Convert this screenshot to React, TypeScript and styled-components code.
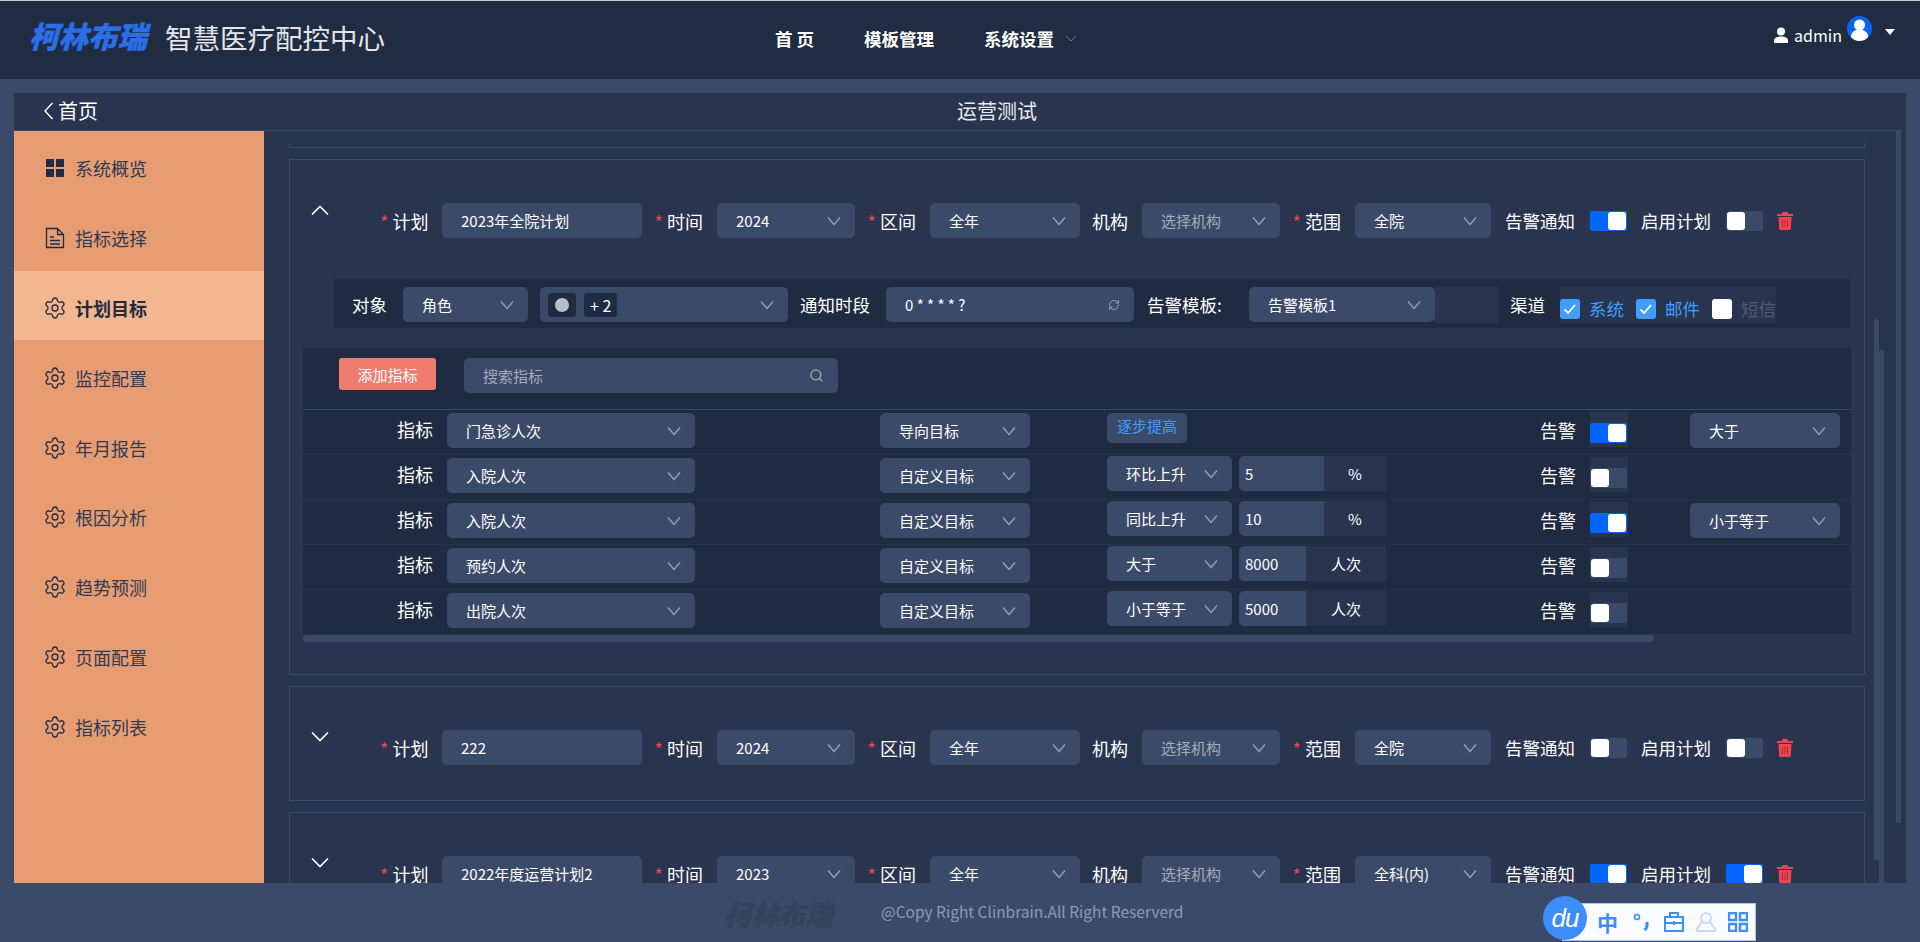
import * as React from 'react';
import styled, { createGlobalStyle } from 'styled-components';
import { RefreshCw, Search, Settings } from 'lucide-react';

const C = {
	header: '#1f2c42',
	page: '#3b4a68',
	panel: '#29344f',
	dark: '#1e2b40',
	field: '#3c4a6a',
	line: '#3a4a6a',
	rowLine: '#27334b',
	sidebar: '#e89c72',
	active: '#f3b68e',
	blue: '#409eff',
	on: '#0066ff',
	red: '#f04450',
	muted: '#a4acbc',
	arrow: '#9aa3b6',
};

const GlobalStyle = createGlobalStyle`
	html, body {
		margin: 0;
		padding: 0;
		background: ${C.page};
	}
	* {
		box-sizing: border-box;
	}
	body {
		font-family: "Noto Sans CJK SC", "Liberation Sans", sans-serif;
		color: #fff;
	}
`;

const Page = styled.div`
	position: relative;
	display: flex;
	flex-direction: column;
	width: 1920px;
	height: 942px;
	overflow: hidden;
	background: ${C.page};
`;

const Header = styled.header`
	display: flex;
	align-items: center;
	flex: none;
	height: 79px;
	padding: 0 25px 3px 32px;
	border-top: 1px solid #c9ccd2;
	background: ${C.header};
`;

const Logo = styled.div<{ $muted?: boolean }>`
	flex: none;
	width: ${p => (p.$muted ? 111 : 117)}px;
	margin: ${p => (p.$muted ? '6px 0 0' : '0 0 5px')};
	font-size: ${p => (p.$muted ? 27 : 29.5)}px;
	line-height: 1;
	font-weight: 900;
	white-space: nowrap;
	color: ${p => (p.$muted ? '#34425c' : '#2a6fe6')};
	-webkit-text-stroke: 0.4px currentColor;
	transform: skewX(-14deg);
`;

const Brand = styled.div`
	flex: none;
	width: 610px;
	margin: 0 0 4px 16px;
	font-size: 27.5px;
	color: #e2e5ea;
	white-space: nowrap;
`;

const Nav = styled.nav`
	display: flex;
	align-items: center;
	gap: 50px;
`;

const NavItem = styled.a`
	display: flex;
	align-items: center;
	gap: 11px;
	font-size: 17.5px;
	font-weight: 700;
	color: #fff;
	white-space: nowrap;
`;

const UserBox = styled.div`
	display: flex;
	align-self: flex-start;
	align-items: flex-start;
	margin: 15px 0 0 auto;
`;

const UserName = styled.span`
	margin: 8px 5px 0 5px;
	font-size: 16px;
	line-height: 22px;
`;

const TopIcon = styled.svg<{ $top: number; $left?: number }>`
	flex: none;
	display: block;
	margin-top: ${p => p.$top}px;
	margin-left: ${p => p.$left ?? 0}px;
`;

const Panel = styled.main`
	display: flex;
	flex-direction: column;
	flex: none;
	width: 1892px;
	height: 790px;
	margin: 14px 0 0 14px;
	background: ${C.panel};
`;

const TitleBar = styled.div`
	display: flex;
	align-items: center;
	flex: none;
	height: 38px;
	margin-right: 5px;
	padding: 0 0 2px 29px;
	border-bottom: 1px solid ${C.line};
`;

const Back = styled.div`
	display: flex;
	align-items: center;
	gap: 4px;
	width: 914px;
	font-size: 20px;
`;

const PageTitle = styled.div`
	font-size: 20px;
	color: #e8ebf0;
`;

const Body = styled.div`
	position: relative;
	display: flex;
	flex: 1;
	min-height: 0;
`;

const Sidebar = styled.aside`
	flex: none;
	width: 250px;
	background: ${C.sidebar};
`;

const MenuItem = styled.div<{ $active?: boolean }>`
	display: flex;
	align-items: center;
	gap: 8px;
	height: 69.8px;
	padding: 5px 0 0 29px;
	font-size: 18px;
	font-weight: ${p => (p.$active ? 700 : 400)};
	color: ${p => (p.$active ? C.dark : '#2f3b52')};
	background: ${p => (p.$active ? C.active : 'transparent')};
`;

const Content = styled.div`
	flex: 1;
	min-width: 0;
	padding: 12px 0 0 25px;
	overflow: hidden;
`;

const CardStub = styled.div`
	width: 1576px;
	height: 5px;
	border: 1px solid ${C.line};
	border-top: 0;
`;

const Card = styled.section<{ $h: number }>`
	width: 1576px;
	height: ${p => p.$h}px;
	margin-top: 11px;
	padding-top: 43px;
	border: 1px solid ${C.line};
`;

const PlanRow = styled.div`
	display: flex;
	align-items: center;
	height: 35px;
`;

const Toggle = styled.div`
	flex: none;
	align-self: flex-start;
	width: 90px;
	padding: 1px 0 0 20px;
`;

const FieldLabel = styled.label<{ $w: number }>`
	flex: none;
	width: ${p => p.$w}px;
	margin-right: 14px;
	font-size: 18px;
	line-height: 32px;
	text-align: right;
	white-space: nowrap;
`;

const Star = styled.span`
	margin-right: 4px;
	color: ${C.red};
	font-size: 18px;
	line-height: 1;
`;

const Field = styled.div<{ $w: number; $muted?: boolean }>`
	display: flex;
	align-items: center;
	justify-content: space-between;
	flex: none;
	width: ${p => p.$w}px;
	height: 35px;
	padding: 0 14px 0 19px;
	border-radius: 5px;
	background: ${C.field};
	font-size: 15px;
	white-space: nowrap;
	color: ${p => (p.$muted ? C.muted : '#fff')};
`;

const SwitchTrack = styled.div<{ $on?: boolean }>`
	display: flex;
	justify-content: ${p => (p.$on ? 'flex-end' : 'flex-start')};
	flex: none;
	width: 37px;
	height: 20px;
	padding: 1px;
	border-radius: 2px;
	background: ${p => (p.$on ? C.on : C.field)};
`;

const Knob = styled.span`
	display: block;
	width: 18px;
	height: 18px;
	border-radius: 3px;
	background: #fff;
`;

const PlainLabel = styled.span`
	flex: none;
	width: 71px;
	margin: 0 14px;
	font-size: 17.5px;
	white-space: nowrap;
`;

const TrashWrap = styled.span`
	display: block;
	flex: none;
	margin-left: 14px;
	line-height: 0;
`;

const NotifyRow = styled.div`
	display: flex;
	align-items: center;
	width: 1516px;
	height: 49px;
	margin: 41px 0 0 44px;
	padding: 2px 0 0 18px;
	background: ${C.dark};
`;

const RowText = styled.span<{ $ml?: number; $w?: number }>`
	flex: none;
	width: ${p => (p.$w ? `${p.$w}px` : 'auto')};
	margin-left: ${p => p.$ml ?? 0}px;
	font-size: 17.5px;
	white-space: nowrap;
`;

const Spaced = styled.div<{ $ml: number }>`
	flex: none;
	margin-left: ${p => p.$ml}px;
`;

const Tags = styled.span`
	display: flex;
	align-items: center;
	gap: 8px;
	margin-left: -11px;
`;

const MiniTag = styled.span`
	display: flex;
	align-items: center;
	justify-content: center;
	min-width: 28px;
	height: 24px;
	padding: 0 6px;
	border-radius: 3px;
	background: ${C.dark};
	font-size: 16px;
`;

const CloseDot = styled.span`
	display: block;
	width: 14px;
	height: 14px;
	border-radius: 50%;
	background: #b9bdc6;
`;

const Filler = styled.div`
	flex: none;
	width: 63px;
	height: 37px;
	background: ${C.panel};
`;

const Channels = styled.div`
	display: flex;
	align-items: center;
	flex: none;
	width: 216px;
	height: 37px;
	margin-left: 15px;
	padding-top: 8px;
	background: ${C.panel};
`;

const Check = styled.span<{ $on?: boolean }>`
	display: flex;
	align-items: center;
	justify-content: center;
	flex: none;
	width: 20px;
	height: 20px;
	margin-right: 9px;
	border-radius: 3px;
	background: ${p => (p.$on ? C.blue : '#fff')};
`;

const CheckText = styled.span<{ $on?: boolean }>`
	flex: none;
	width: 47px;
	font-size: 17.5px;
	white-space: nowrap;
	color: ${p => (p.$on ? C.blue : '#525c6e')};
`;

const TableBlock = styled.div`
	width: 1548px;
	height: 286px;
	margin: 20px 0 0 13px;
	background: ${C.dark};
`;

const Toolbar = styled.div`
	display: flex;
	align-items: flex-start;
	height: 62px;
	padding: 10px 0 0 36px;
	border-bottom: 1px solid ${C.line};
`;

const AddButton = styled.button`
	flex: none;
	width: 97px;
	height: 32px;
	margin-right: 28px;
	padding: 0;
	border: 0;
	border-radius: 3px;
	background: #f07c70;
	color: #fff;
	font-family: inherit;
	font-size: 15px;
`;

const TableRow = styled.div`
	display: flex;
	align-items: flex-start;
	height: 45px;
	border-bottom: 1px solid ${C.rowLine};

	&:last-child {
		border-bottom: 0;
	}
`;

const RowLabel = styled.span`
	flex: none;
	width: 130px;
	margin-right: 14px;
	font-size: 18px;
	line-height: 38px;
	text-align: right;
`;

const RowSelect = styled(Field)<{ $ml?: number }>`
	margin-top: 3px;
	margin-left: ${p => p.$ml ?? 0}px;
`;

const TypeCell = styled.div`
	display: flex;
	flex: none;
	gap: 7px;
	width: 433px;
	margin: 1px 0 0 77px;
`;

const Goal = styled.span`
	display: flex;
	align-items: center;
	justify-content: center;
	flex: none;
	width: 80px;
	height: 30px;
	margin-top: 2px;
	padding-bottom: 5px;
	border-radius: 5px;
	background: ${C.field};
	color: ${C.blue};
	font-size: 15px;
`;

const NumberBox = styled.div<{ $w: number }>`
	display: flex;
	align-items: center;
	flex: none;
	width: ${p => p.$w}px;
	height: 35px;
	padding-left: 6px;
	border-radius: 5px 0 0 5px;
	background: ${C.field};
	font-size: 15px;
`;

const Addon = styled.div<{ $w: number }>`
	display: flex;
	align-items: center;
	justify-content: center;
	flex: none;
	width: ${p => p.$w}px;
	height: 35px;
	margin-left: -7px;
	background: ${C.panel};
	font-size: 15px;
`;

const AlertLabel = styled.span`
	flex: none;
	width: 37px;
	margin-right: 13px;
	font-size: 18px;
	line-height: 40px;
	white-space: nowrap;
`;

const SwitchCell = styled.div`
	flex: none;
	width: 38px;
	height: 35px;
	margin: 2px 62px 0 0;
	padding-top: 11px;
	background: ${C.panel};
`;

const ScrollX = styled.div`
	width: 1351px;
	height: 7px;
	margin: 1px 0 0 13px;
	border-radius: 4px;
	background: ${C.field};
`;

const ScrollY = styled.div<{ $right: number; $top: number; $h: number }>`
	position: absolute;
	top: ${p => p.$top}px;
	right: ${p => p.$right}px;
	width: 5px;
	height: ${p => p.$h}px;
	border-radius: 3px 3px 0 0;
	background: ${C.field};
`;

const Footer = styled.footer`
	display: flex;
	align-items: center;
	flex: 1;
	padding: 0 0 4px 727px;
	background: ${C.page};
`;

const Copy = styled.span`
	margin-left: 43px;
	font-size: 15.5px;
	color: #8f9aaf;
	white-space: nowrap;
`;

const Ime = styled.div`
	position: absolute;
	top: 903px;
	left: 1562px;
	display: flex;
	align-items: center;
	width: 194px;
	height: 38px;
	padding-left: 34px;
	border: 1px solid #a9c8f6;
	background: #fafcff;
	color: #3d8ef8;
`;

const ImeBadge = styled.div`
	position: absolute;
	top: -8px;
	left: -20px;
	display: flex;
	align-items: center;
	justify-content: center;
	width: 44px;
	height: 44px;
	border-radius: 50%;
	background: #3d8ef8;
	color: #fff;
	font-family: "Liberation Sans", sans-serif;
	font-size: 26px;
	font-style: italic;
	letter-spacing: -1px;
`;

const ImeChar = styled.span`
	flex: none;
	width: 35px;
	font-size: 21px;
	font-weight: 700;
`;

const ImeIcon = styled.svg`
	display: block;
	flex: none;
	margin-right: 12px;
`;

const Chevron = () => (
	<svg width="14" height="10" viewBox="0 0 14 10" fill="none">
		<path d="M1 1.500l6 7 6-7" stroke={C.arrow} strokeWidth="1.300" />
	</svg>
);

const Fold = ({ open }: { open?: boolean }) => (
	<svg width="20" height="12" viewBox="0 0 20 12" fill="none" style={{ display: 'block' }}>
		<path d={open ? 'M2 10.500l8-8 8 8' : 'M2 1.500l8 8 8-8'} stroke="#fff" strokeWidth="1.600" />
	</svg>
);

const Switch = ({ on }: { on?: boolean }) => (
	<SwitchTrack $on={on}>
		<Knob />
	</SwitchTrack>
);

const Trash = () => (
	<svg width="16" height="18" viewBox="0 0 16 18" fill={C.red}>
		<path d="M5.500 0h5l.7 2H16v2H0V2h4.800zM1.500 5h13l-.7 12a1 1 0 0 1-1 1H3.200a1 1 0 0 1-1-1z" />
		<path d="M5.500 7.500v7.500M8 7.500v7.500M10.500 7.500v7.500" stroke="#a82836" strokeWidth="1" />
	</svg>
);

const Tick = () => (
	<svg width="14" height="12" viewBox="0 0 14 12" fill="none">
		<path d="M1.500 6.500l3.500 3.500 7-8" stroke="#fff" strokeWidth="1.800" />
	</svg>
);

const Required = ({ text, w = 48 }: { text: string; w?: number }) => (
	<FieldLabel $w={w}>
		<Star>*</Star>
		{text}
	</FieldLabel>
);

interface PlanProps {
	name: string;
	year: string;
	scope: string;
	open?: boolean;
	alert?: boolean;
	enabled?: boolean;
}

const Plan = ({ name, year, scope, open, alert, enabled }: PlanProps) => (
	<PlanRow>
		<Toggle>
			<Fold open={open} />
		</Toggle>
		<Required text="计划" />
		<Field $w={200}>{name}</Field>
		<Required text="时间" w={61} />
		<Field $w={138}>
			{year}
			<Chevron />
		</Field>
		<Required text="区间" w={61} />
		<Field $w={150}>
			全年
			<Chevron />
		</Field>
		<FieldLabel $w={48}>机构</FieldLabel>
		<Field $w={138} $muted>
			选择机构
			<Chevron />
		</Field>
		<Required text="范围" w={61} />
		<Field $w={136}>
			{scope}
			<Chevron />
		</Field>
		<PlainLabel>告警通知</PlainLabel>
		<Switch on={alert} />
		<PlainLabel>启用计划</PlainLabel>
		<Switch on={enabled} />
		<TrashWrap>
			<Trash />
		</TrashWrap>
	</PlanRow>
);

interface Metric {
	name: string;
	target: string;
	type?: string;
	value?: string;
	unit?: string;
	alert?: boolean;
	compare?: string;
}

const metrics: Metric[] = [
	{ name: '门急诊人次', target: '导向目标', alert: true, compare: '大于' },
	{ name: '入院人次', target: '自定义目标', type: '环比上升', value: '5', unit: '%' },
	{ name: '入院人次', target: '自定义目标', type: '同比上升', value: '10', unit: '%', alert: true, compare: '小于等于' },
	{ name: '预约人次', target: '自定义目标', type: '大于', value: '8000', unit: '人次' },
	{ name: '出院人次', target: '自定义目标', type: '小于等于', value: '5000', unit: '人次' },
];

const menu = ['系统概览', '指标选择', '计划目标', '监控配置', '年月报告', '根因分析', '趋势预测', '页面配置', '指标列表'];

const MenuIcon = ({ index }: { index: number }) => {
	if (index === 0) {
		return (
			<svg width="24" height="24" viewBox="0 0 24 24" fill={C.dark}>
				<path d="M3 3h8v8H3zM13 3h8v8h-8zM3 13h8v8H3zM13 13h8v8h-8z" />
			</svg>
		);
	}
	if (index === 1) {
		return (
			<svg width="24" height="24" viewBox="0 0 24 24" fill="none" stroke={C.dark} strokeWidth="1.300">
				<path d="M3.500 2.500h11l6 6v13h-17zM14.500 2.500v6h6M7 11h4M7 14.500h10M7 18h10" />
			</svg>
		);
	}
	return <Settings size={24} strokeWidth={1.3} color={C.dark} />;
};

const App = () => (
	<Page>
		<GlobalStyle />
		<Header>
			<Logo>柯林布瑞</Logo>
			<Brand>智慧医疗配控中心</Brand>
			<Nav>
				<NavItem>首 页</NavItem>
				<NavItem>模板管理</NavItem>
				<NavItem>
					系统设置
					<svg width="12" height="7" viewBox="0 0 12 7" fill="none">
						<path d="M1 1l5 5 5-5" stroke="#6f7a8e" strokeWidth="1" />
					</svg>
				</NavItem>
			</Nav>
			<UserBox>
				<TopIcon $top={11} width="16" height="16" viewBox="0 0 16 16" fill="#fff">
					<circle cx="8" cy="4.500" r="4" />
					<path d="M1 16v-2.500c0-2.500 3-4 7-4s7 1.500 7 4V16z" />
				</TopIcon>
				<UserName>admin</UserName>
				<TopIcon $top={0} width="25" height="25" viewBox="0 0 25 25">
					<circle cx="12.500" cy="12.500" r="12.500" fill="#0a66f0" />
					<circle cx="12.500" cy="9" r="5.500" fill="#fff" />
					<path d="M4 21c0-5 4-7.500 8.500-7.500S21 16 21 21c-2 2.500-5 4-8.500 4S6 23.500 4 21z" fill="#fff" />
				</TopIcon>
				<TopIcon $top={13} $left={13} width="10" height="6" viewBox="0 0 10 6" fill="#fff">
					<path d="M0 0h10L5 6z" />
				</TopIcon>
			</UserBox>
		</Header>
		<Panel>
			<TitleBar>
				<Back>
					<svg width="11" height="18" viewBox="0 0 11 18" fill="none">
						<path d="M9.500 1L2 9l7.500 8" stroke="#fff" strokeWidth="1.400" />
					</svg>
					首页
				</Back>
				<PageTitle>运营测试</PageTitle>
			</TitleBar>
			<Body>
				<Sidebar>
					{menu.map((item, i) => (
						<MenuItem key={item} $active={i === 2}>
							<MenuIcon index={i} />
							{item}
						</MenuItem>
					))}
				</Sidebar>
				<Content>
					<CardStub />
					<Card $h={516}>
						<Plan name="2023年全院计划" year="2024" scope="全院" open alert />
						<NotifyRow>
							<RowText $w={36}>对象</RowText>
							<Spaced $ml={15}>
								<Field $w={125}>
									角色
									<Chevron />
								</Field>
							</Spaced>
							<Spaced $ml={12}>
								<Field $w={248}>
									<Tags>
										<MiniTag>
											<CloseDot />
										</MiniTag>
										<MiniTag>+ 2</MiniTag>
									</Tags>
									<Chevron />
								</Field>
							</Spaced>
							<RowText $ml={12} $w={71}>
								通知时段
							</RowText>
							<Spaced $ml={15}>
								<Field $w={248}>
									0 * * * * ?
									<RefreshCw size={12} color={C.arrow} />
								</Field>
							</Spaced>
							<RowText $ml={13} $w={76}>
								告警模板:
							</RowText>
							<Spaced $ml={26}>
								<Field $w={186}>
									告警模板1
									<Chevron />
								</Field>
							</Spaced>
							<Filler />
							<RowText $ml={12} $w={35}>
								渠道
							</RowText>
							<Channels>
								<Check $on>
									<Tick />
								</Check>
								<CheckText $on>系统</CheckText>
								<Check $on>
									<Tick />
								</Check>
								<CheckText $on>邮件</CheckText>
								<Check />
								<CheckText>短信</CheckText>
							</Channels>
						</NotifyRow>
						<TableBlock>
							<Toolbar>
								<AddButton>添加指标</AddButton>
								<Field $w={374} $muted>
									搜索指标
									<Search size={15} color={C.muted} />
								</Field>
							</Toolbar>
							{metrics.map((m, i) => (
								<TableRow key={i}>
									<RowLabel>指标</RowLabel>
									<RowSelect $w={248}>
										{m.name}
										<Chevron />
									</RowSelect>
									<RowSelect $w={150} $ml={185}>
										{m.target}
										<Chevron />
									</RowSelect>
									<TypeCell>
										{m.type ? (
											<>
												<Field $w={125}>
													{m.type}
													<Chevron />
												</Field>
												<NumberBox $w={m.unit === '%' ? 85 : 67}>{m.value}</NumberBox>
												<Addon $w={m.unit === '%' ? 62 : 80}>{m.unit}</Addon>
											</>
										) : (
											<Goal>逐步提高</Goal>
										)}
									</TypeCell>
									<AlertLabel>告警</AlertLabel>
									<SwitchCell>
										<Switch on={m.alert} />
									</SwitchCell>
									{m.compare && (
										<RowSelect $w={150}>
											{m.compare}
											<Chevron />
										</RowSelect>
									)}
								</TableRow>
							))}
						</TableBlock>
						<ScrollX />
					</Card>
					<Card $h={115}>
						<Plan name="222" year="2024" scope="全院" />
					</Card>
					<Card $h={300}>
						<Plan name="2022年度运营计划2" year="2023" scope="全科(内)" alert enabled />
					</Card>
				</Content>
				<ScrollY $right={5} $top={-1} $h={693} />
				<ScrollY $right={27} $top={188} $h={541} />
				<ScrollY $right={22} $top={219} $h={533} />
			</Body>
		</Panel>
		<Footer>
			<Logo $muted>柯林布瑞</Logo>
			<Copy>@Copy Right Clinbrain.All Right Reserverd</Copy>
		</Footer>
		<Ime>
			<ImeBadge>du</ImeBadge>
			<ImeChar>中</ImeChar>
			<ImeIcon width="20" height="20" viewBox="0 0 20 20" fill="none" stroke="#3d8ef8" strokeWidth="2">
				<circle cx="5" cy="5" r="2.500" strokeWidth="1.500" />
				<path d="M15 10v4c0 2-1 3-2.500 4" strokeWidth="3" />
			</ImeIcon>
			<ImeIcon width="20" height="20" viewBox="0 0 20 20" fill="none" stroke="#3d8ef8" strokeWidth="2">
				<path d="M1 5h18v14H1zM6 5V1h8v4M1 11h18M10 9v4" />
			</ImeIcon>
			<ImeIcon width="20" height="20" viewBox="0 0 20 20" fill="none" stroke="#c3dbfb" strokeWidth="2">
				<circle cx="10" cy="6" r="5" />
				<path d="M6 10L1 17v2h18v-2l-5-7" />
			</ImeIcon>
			<ImeIcon width="20" height="20" viewBox="0 0 20 20" fill="none" stroke="#3d8ef8" strokeWidth="2.400">
				<path d="M1 1h7v7H1zM12 1h7v7h-7zM1 12h7v7H1zM12 12h7v7h-7z" />
			</ImeIcon>
		</Ime>
	</Page>
);

export default App;
